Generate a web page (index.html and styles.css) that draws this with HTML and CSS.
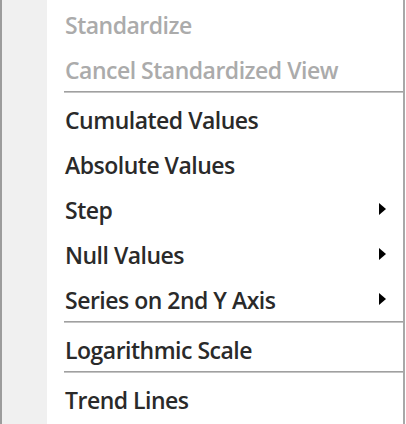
FILE: index.html
```html
<!DOCTYPE html>
<html lang="en">
<head>
  <meta charset="UTF-8" />
  <title>Chart Context Menu</title>
  <link rel="stylesheet" href="styles.css">
</head>
<body>

  <!-- Context menu -->
  <div class="menu">
    <div class="item disabled">Standardize</div>
    <div class="item disabled">Cancel Standardized View</div>
    <div class="sep"></div>
    <div class="item">Cumulated Values</div>
    <div class="item">Absolute Values</div>
    <div class="item sub">Step</div>
    <div class="item sub">Null Values</div>
    <div class="item sub">Series on 2nd Y Axis</div>
    <div class="sep"></div>
    <div class="item">Logarithmic Scale</div>
    <div class="sep"></div>
    <div class="item">Trend Lines</div>
  </div>

</body>
</html>
```

FILE: styles.css
```css
body {
  margin: 0;
  padding: 0;
  background-color: #fff;
  font-family: 'Open Sans', 'Noto Sans', sans-serif;
}

.menu {
  width: 401px;
  height: 423px;
  padding-top: 1px;
  border-left: 2px solid #9c9c9c;
  border-right: 2px solid #a8a8a8;
  background: linear-gradient(to right, #f0f0f0 45px, #fff 45px);
}

.item {
  height: 45px;
  line-height: 48px;
  padding-left: 63px;
  font-size: 23px;
  font-weight: 600;
  letter-spacing: -0.5px;
  color: #2a2a2a;
  position: relative;
}

.item.disabled {
  color: #ababab;
}

/* submenu arrow */
.item.sub::after {
  content: "";
  position: absolute;
  left: 377px;
  top: 17px;
  border-top: 6.5px solid transparent;
  border-bottom: 6.5px solid transparent;
  border-left: 7px solid #000;
}

.sep {
  height: 5px;
  margin-left: 62px;
  box-sizing: border-box;
  border-top: 1px solid #a0a0a0;
  box-shadow: inset 0 1px 0 #c4c4c4;
}
```
